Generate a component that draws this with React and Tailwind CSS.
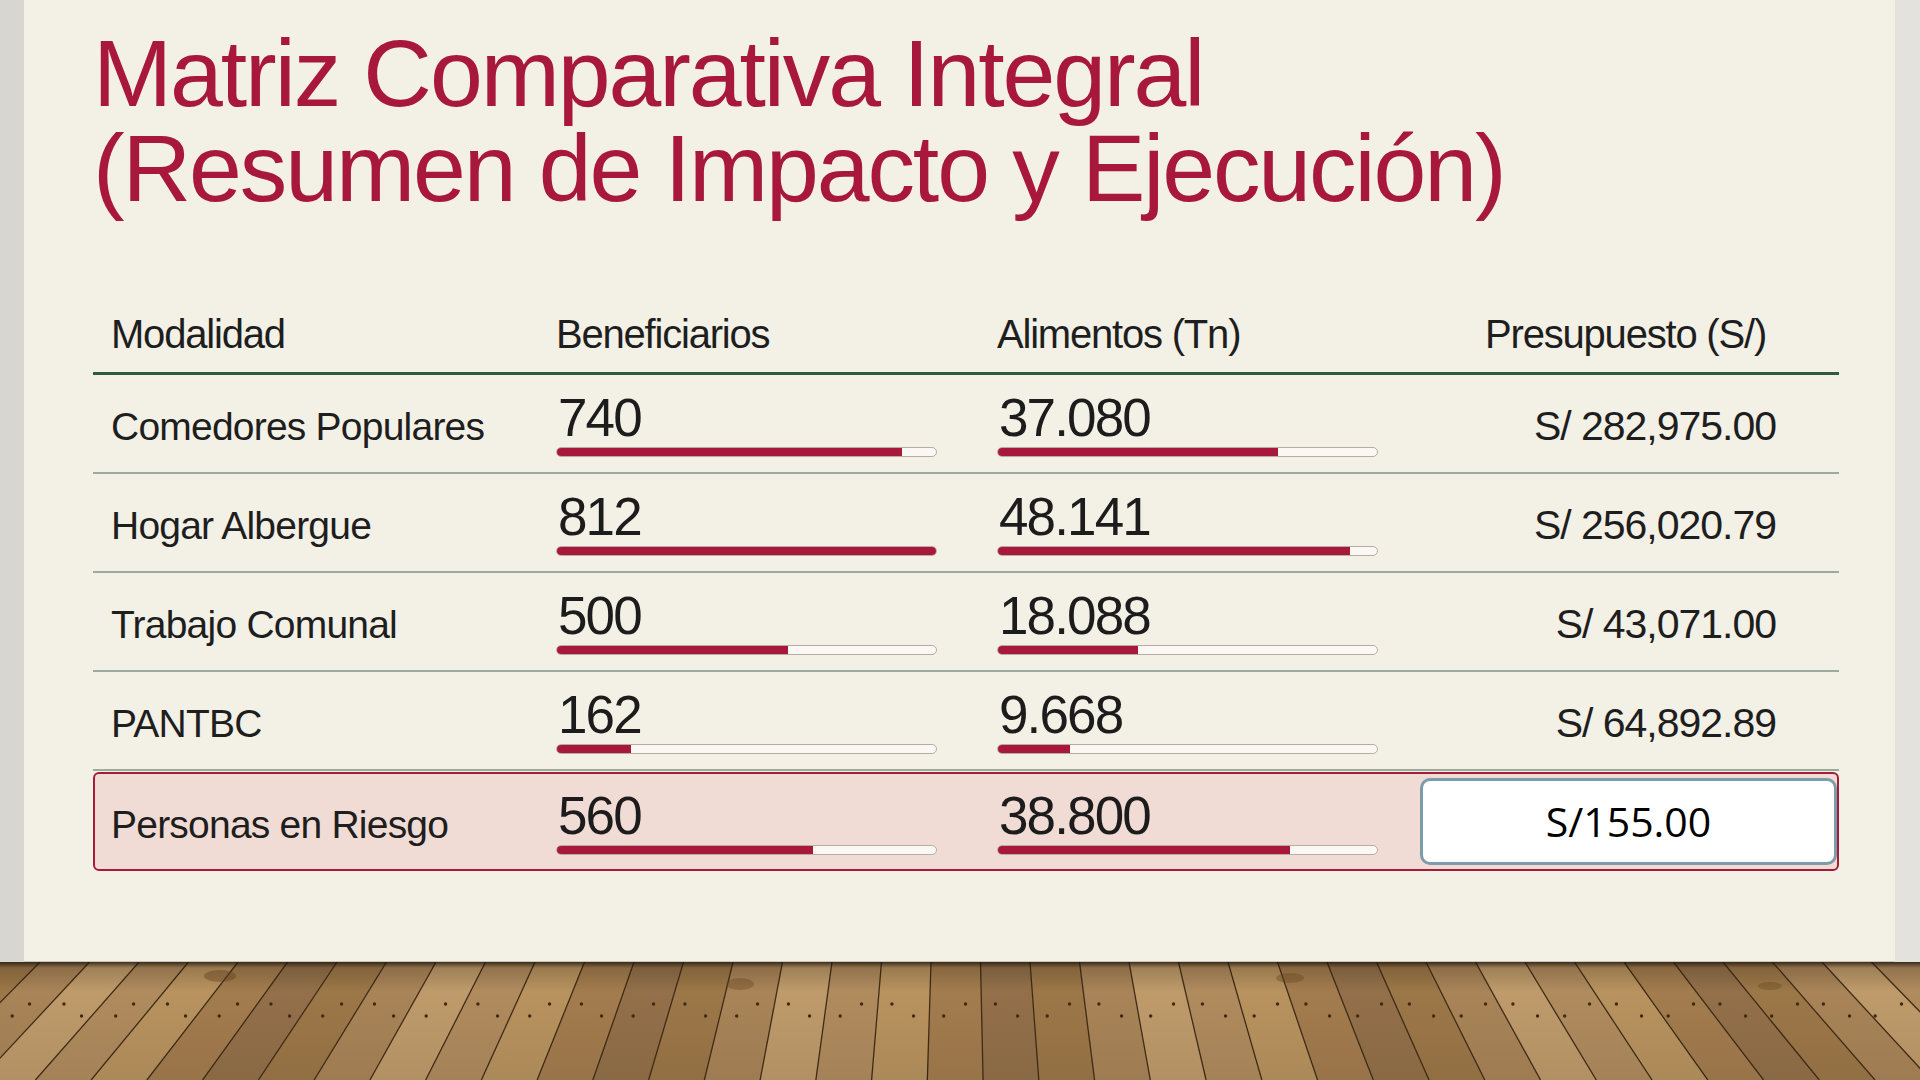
import React from 'react';

const rows = [
  { name: 'Comedores Populares', ben: '740', benPct: 91, ali: '37.080', aliPct: 74, pres: 'S/ 282,975.00' },
  { name: 'Hogar Albergue', ben: '812', benPct: 100, ali: '48.141', aliPct: 93, pres: 'S/ 256,020.79' },
  { name: 'Trabajo Comunal', ben: '500', benPct: 61, ali: '18.088', aliPct: 37, pres: 'S/ 43,071.00' },
  { name: 'PANTBC', ben: '162', benPct: 19.5, ali: '9.668', aliPct: 19, pres: 'S/ 64,892.89' },
];

const risk = { name: 'Personas en Riesgo', ben: '560', benPct: 67.5, ali: '38.800', aliPct: 77, pres: 'S/155.00' };

const sans = { fontFamily: '"Liberation Sans", Arial, sans-serif' };

const Bar = ({ pct }) => (
  <div className="mt-[3px] h-[10px] w-[381px] overflow-hidden rounded-full border border-[#b5ada5] bg-[#fbf8f3]">
    <div className="h-full bg-[#a8183a]" style={{ width: `${pct}%` }} />
  </div>
);

const Figure = ({ value, pct }) => (
  <div className="flex flex-col">
    <span className="pl-[2px] text-[53px] leading-none tracking-[-0.035em] text-[#1c1c1c]">{value}</span>
    <Bar pct={pct} />
  </div>
);

// wooden floor under the slide, planks converge toward a point above the centre
const Floor = () => {
  const vx = 960;
  const depth = 935;
  const h = 118;
  const k = (depth + h) / depth;
  const fills = ['#a98458', '#b8935f', '#9c7748', '#b08b5e', '#93704a', '#bf9b6b', '#a37c4e'];
  const planks = [];
  for (let i = -6; i < 42; i++) {
    const a = 40 + 49.5 * i;
    const b = a + 49.5;
    const a2 = vx + (a - vx) * k;
    const b2 = vx + (b - vx) * k;
    planks.push({ i, a, b, a2, b2, fill: fills[((i * 5) % 7 + 7) % 7] });
  }
  return (
    <svg width="1920" height="118" viewBox="0 0 1920 118" className="block">
      <defs>
        <linearGradient id="floorShade" x1="0" y1="0" x2="0" y2="1">
          <stop offset="0" stopColor="#1e140a" stopOpacity="0.8" />
          <stop offset="0.05" stopColor="#1e140a" stopOpacity="0.2" />
          <stop offset="0.25" stopColor="#1e140a" stopOpacity="0" />
          <stop offset="1" stopColor="#1e140a" stopOpacity="0.08" />
        </linearGradient>
      </defs>
      <rect width="1920" height="118" fill="#a98458" />
      {planks.map((p) => (
        <g key={p.i}>
          <polygon points={`${p.a},0 ${p.b},0 ${p.b2},118 ${p.a2},118`} fill={p.fill} />
          <line x1={p.a} y1="0" x2={p.a2} y2="118" stroke="#3f2c18" strokeWidth="1.3" />
          <circle cx={p.a + (p.a2 - p.a) * 0.36 + 14} cy={p.i % 2 ? 42 : 54} r="1.7" fill="#3f2a14" />
          <circle cx={p.a + (p.a2 - p.a) * 0.4 + 36} cy={p.i % 2 ? 54 : 42} r="1.7" fill="#3f2a14" />
        </g>
      ))}
      <ellipse cx="220" cy="14" rx="16" ry="6" fill="#6f4a24" opacity="0.45" />
      <ellipse cx="740" cy="22" rx="14" ry="6" fill="#6f4a24" opacity="0.4" />
      <ellipse cx="1290" cy="16" rx="14" ry="5" fill="#6f4a24" opacity="0.4" />
      <ellipse cx="1770" cy="24" rx="12" ry="4" fill="#6f4a24" opacity="0.4" />
      <rect width="1920" height="118" fill="url(#floorShade)" />
    </svg>
  );
};

export default function App() {
  return (
    <div className="flex h-[1080px] w-[1920px] flex-col overflow-hidden bg-[#f3f0e6]" style={sans}>
      <div className="flex h-[962px]">
        <div className="w-[24px] bg-[#d7d6d1]" />

        <div className="flex-1 border-b border-[#c9c5ba] bg-[#f3f0e6] pl-[69px] pr-[32px]">
          <h1 className="pt-[26px] text-[95px] font-normal leading-[95px] tracking-[-0.022em] text-[#a8183c]">
            Matriz Comparativa Integral
            <br />
            (Resumen de Impacto y Ejecución)
          </h1>

          <div className="w-[1746px]">
            <div className="mt-[98px] grid grid-cols-[463px_441px_423px_1fr] border-b-[3px] border-[#2e5b40] pb-[18px] text-[40px] leading-none tracking-[-0.03em] text-[#1e1e1e]">
              <span className="pl-[18px]">Modalidad</span>
              <span>Beneficiarios</span>
              <span>Alimentos (Tn)</span>
              <span className="pr-[73px] text-right">Presupuesto (S/)</span>
            </div>

            {rows.map((r) => (
              <div
                key={r.name}
                className="grid h-[99px] grid-cols-[463px_441px_423px_1fr] items-center border-b-2 border-[#9aab9f]"
              >
                <span className="pl-[18px] pt-[6px] text-[39px] leading-none tracking-[-0.02em] text-[#1e1e1e]">{r.name}</span>
                <Figure value={r.ben} pct={r.benPct} />
                <Figure value={r.ali} pct={r.aliPct} />
                <span className="pr-[63px] pt-[6px] text-right text-[41px] leading-none tracking-[-0.025em] text-[#1e1e1e]">
                  {r.pres}
                </span>
              </div>
            ))}

            <div className="mt-[1px] grid h-[99px] grid-cols-[461px_441px_423px_1fr] items-center rounded-[6px] border-2 border-[#a51c3b] bg-[#f1dbd5]">
              <span className="pl-[16px] pt-[6px] text-[39px] leading-none tracking-[-0.02em] text-[#1e1e1e]">{risk.name}</span>
              <Figure value={risk.ben} pct={risk.benPct} />
              <Figure value={risk.ali} pct={risk.aliPct} />
              <div className="flex h-[87px] items-center justify-center rounded-[10px] border-[3px] border-[#7d9cab] bg-white">
                <span className="text-[41px] leading-none text-black" style={{ fontFamily: '"Open Sans", sans-serif' }}>
                  {risk.pres}
                </span>
              </div>
            </div>
          </div>
        </div>

        <div className="w-[25px] bg-[#e3e2dd]" />
      </div>

      <Floor />
    </div>
  );
}
